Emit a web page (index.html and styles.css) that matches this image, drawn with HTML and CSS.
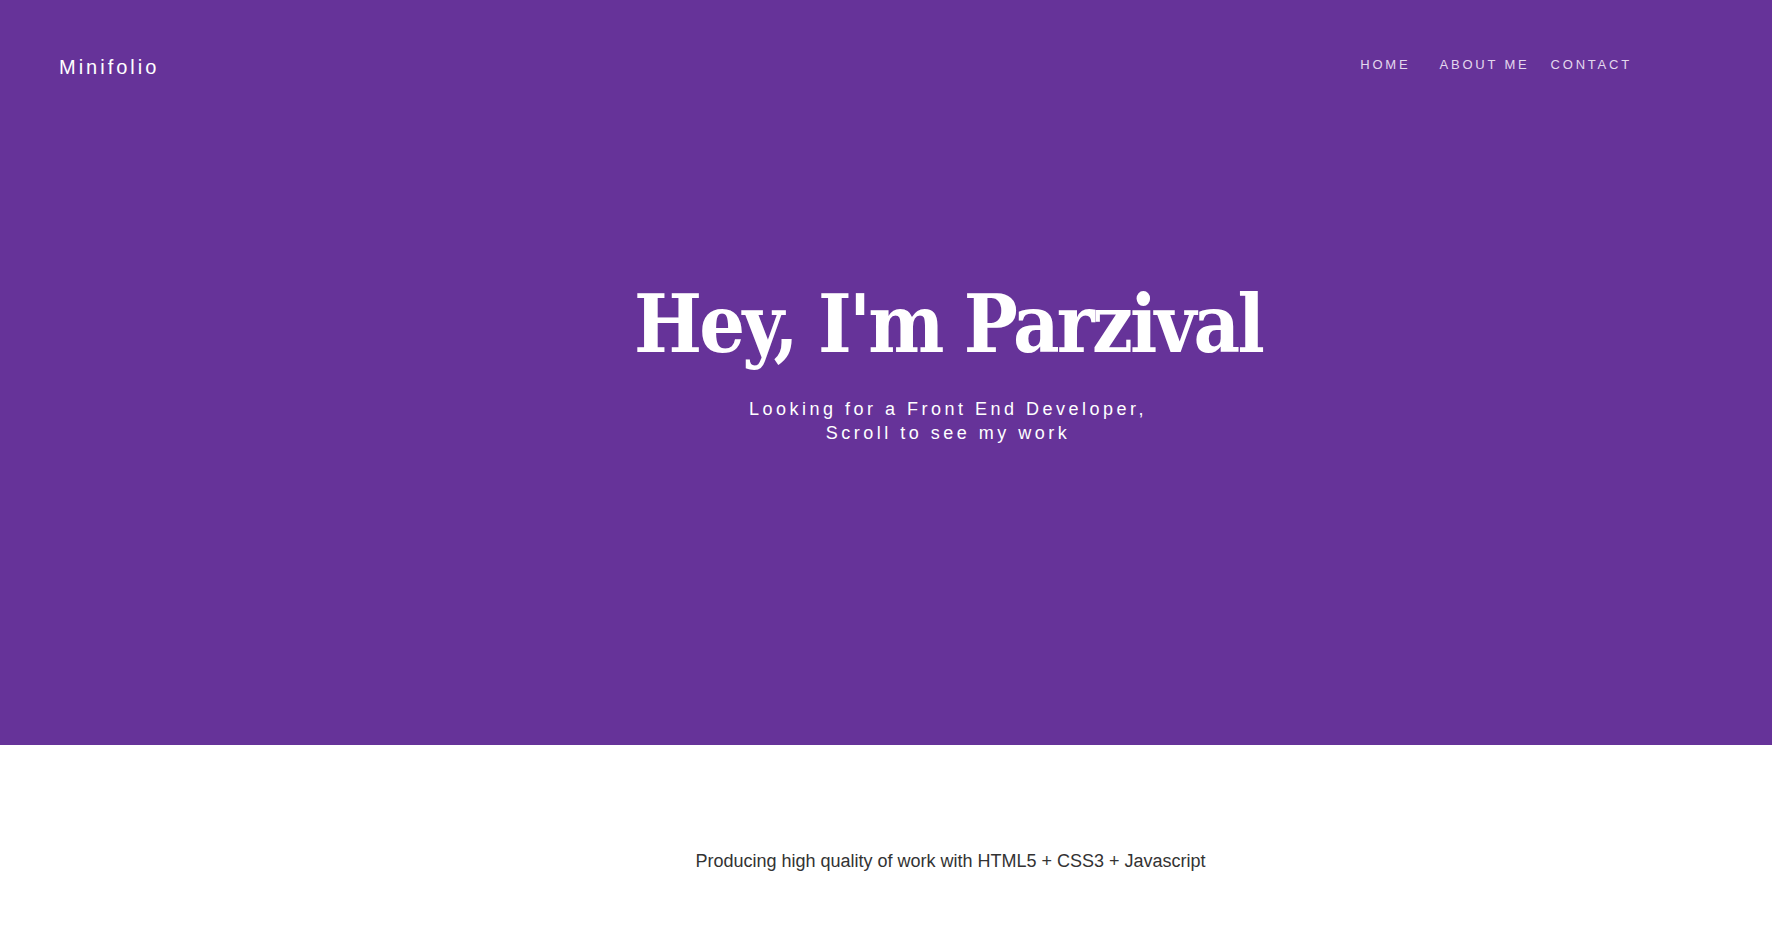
FILE: index.html
```html
<!DOCTYPE html>
<html>
<head>
<meta charset="utf-8">
<link rel="stylesheet" href="styles.css">
</head>
<body>
<header class="hero">
  <nav class="topbar">
    <div class="logo">Minifolio</div>
    <ul class="menu">
      <li class="first"><a href="#">HOME</a></li>
      <li><a href="#">ABOUT ME</a></li>
      <li><a href="#">CONTACT</a></li>
    </ul>
  </nav>
  <div class="intro">
    <h1 class="title">Hey, I'm Parzival</h1>
    <p class="tagline">Looking for a Front End Developer,<br>Scroll to see my work</p>
  </div>
</header>
<section class="about">
  <p class="lead">Producing high quality of work with HTML5 + CSS3 + Javascript</p>
</section>
</body>
</html>
```

FILE: styles.css
```css
* { box-sizing: border-box; }
html, body { margin: 0; padding: 0; }
body {
  font-family: "Liberation Sans", Arial, sans-serif;
  background: #fff;
}
.hero {
  background: #663399;
  height: 745px;
  display: flex;
  flex-direction: column;
}
.topbar {
  display: flex;
  justify-content: space-between;
  align-items: flex-start;
  padding: 55px 140px 0 59px;
}
.logo {
  color: #fff;
  font-size: 20px;
  line-height: 23px;
  letter-spacing: 3px;
  margin-top: 1px;
}
.menu {
  list-style: none;
  margin: 2px 0 0;
  padding: 0;
  display: flex;
  gap: 21px;
  font-size: 13px;
  line-height: 15px;
}
.menu .first {
  margin-right: 8px;
}
.menu a {
  color: #e4d8ee;
  text-decoration: none;
  letter-spacing: 2.8px;
}
.intro {
  padding-left: 124px;
  text-align: center;
  color: #fff;
  margin-top: 205px;
}
.title {
  margin: 0;
  font-family: "DejaVu Serif Condensed", "DejaVu Serif", serif;
  font-stretch: condensed;
  font-weight: bold;
  font-size: 80px;
  line-height: 1;
  letter-spacing: -2.8px;
}
.tagline {
  margin: 33px 0 0;
  font-size: 18px;
  line-height: 24px;
  letter-spacing: 3.5px;
}
.about {
  padding: 106px 0 0 129px;
  text-align: center;
}
.lead {
  margin: 0;
  font-size: 18px;
  color: #333;
}
```
